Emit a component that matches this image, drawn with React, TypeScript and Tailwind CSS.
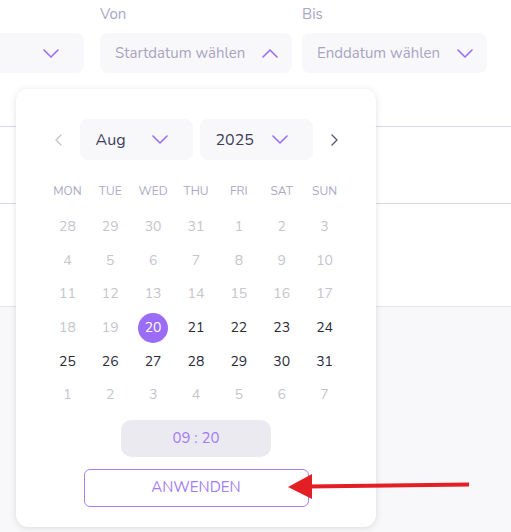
import React from "react";

const WEEKDAYS = ["MON", "TUE", "WED", "THU", "FRI", "SAT", "SUN"];

type Day = { n: number; muted: boolean };

const DAYS: Day[] = [
  ...[28, 29, 30, 31, 1, 2, 3, 4, 5, 6, 7, 8, 9, 10, 11, 12, 13, 14, 15, 16, 17, 18, 19].map((n) => ({ n, muted: true })),
  ...Array.from({ length: 12 }, (_, i) => ({ n: 20 + i, muted: false })),
  ...[1, 2, 3, 4, 5, 6, 7].map((n) => ({ n, muted: true })),
];

function ChevronDown({ className = "" }: { className?: string }) {
  return (
    <svg width="16" height="9" viewBox="0 0 16 9" className={className} fill="none">
      <path d="M1 1l7 7 7-7" stroke="#9b6cf6" strokeWidth="1.6" strokeLinecap="round" strokeLinejoin="round" />
    </svg>
  );
}

function ChevronUp() {
  return (
    <svg width="16" height="9" viewBox="0 0 16 9" fill="none">
      <path d="M1 8l7-7 7 7" stroke="#9b6cf6" strokeWidth="1.6" strokeLinecap="round" strokeLinejoin="round" />
    </svg>
  );
}

function SelectBox({ text, open, className = "" }: { text: string; open?: boolean; className?: string }) {
  return (
    <div className={`flex h-10 items-center justify-between rounded-lg bg-[#f8f8fb] pl-[15px] text-[15px] text-[#a9a4c2] ${className}`}>
      <span>{text}</span>
      {open ? <ChevronUp /> : <ChevronDown />}
    </div>
  );
}

export default function App() {
  return (
    <div className="relative h-[532px] w-[511px] overflow-hidden bg-white font-['Nunito','Lato',sans-serif]">
      {/* page behind */}
      <div className="flex h-[126px] items-start gap-[10px] pt-[5px]">
        <div className="mr-[6px] flex flex-col">
          <div className="h-7" />
          <SelectBox text="" className="ml-[-20px] w-[104px] pr-[25px]" />
        </div>
        <div className="flex flex-col">
          <div className="h-7 -translate-y-[2px] text-[15px] text-[#a9a5c6]">Von</div>
          <SelectBox text="Startdatum wählen" open className="w-[192px] pr-[14px]" />
        </div>
        <div className="flex flex-col">
          <div className="h-7 -translate-y-[2px] text-[15px] text-[#a9a5c6]">Bis</div>
          <SelectBox text="Enddatum wählen" className="w-[185px] pr-[14px]" />
        </div>
      </div>
      <div className="h-[77px] border-t border-[#d9d5ea]" />
      <div className="h-[103px] border-t border-[#d9d5ea]" />
      <div className="h-[300px] border-t border-[#e6e4ee] bg-[#f8f8fa]" />

      {/* date picker popover */}
      <div className="absolute left-4 top-[89px] flex h-[438px] w-[360px] flex-col items-center rounded-xl bg-white px-[30px] pt-[30px] shadow-[0_1px_6px_rgba(60,60,90,0.16)]">
        <div className="flex items-center gap-[7px]">
          <svg width="20" height="20" viewBox="0 0 20 20" fill="none" className="mr-[4px]">
            <path d="M12 5l-5 5 5 5" stroke="#c2c0cc" strokeWidth="1.3" strokeLinecap="round" strokeLinejoin="round" />
          </svg>
          <div className="flex h-[41px] w-[113px] items-center justify-between rounded-lg bg-[#f8f8fb] pl-4 pr-[25px] text-[16px] text-[#3e3d5c]">
            <span>Aug</span>
            <ChevronDown />
          </div>
          <div className="flex h-[41px] w-[113px] items-center justify-between rounded-lg bg-[#f8f8fb] pl-4 pr-[25px] text-[16px] text-[#3e3d5c]">
            <span>2025</span>
            <ChevronDown />
          </div>
          <svg width="20" height="20" viewBox="0 0 20 20" fill="none" className="ml-[4px]">
            <path d="M8 5l5 5-5 5" stroke="#55546e" strokeWidth="1.3" strokeLinecap="round" strokeLinejoin="round" />
          </svg>
        </div>

        <div className="mt-[22px] grid w-[300px] grid-cols-7">
          {WEEKDAYS.map((d) => (
            <div key={d} className="flex h-[18px] items-center justify-center text-[12px] text-[#aca9c6]">
              {d}
            </div>
          ))}
        </div>

        <div className="mt-[10px] grid w-[300px] grid-cols-7">
          {DAYS.map((d, i) => (
            <div key={i} className="flex h-[33.6px] items-center justify-center">
              {d.n === 20 && !d.muted ? (
                <span className="flex h-[30px] w-[30px] items-center justify-center rounded-full bg-[#9b6cf6] text-[14px] text-white">
                  20
                </span>
              ) : (
                <span className={`text-[14px] ${d.muted ? "text-[#c6c5cc]" : "text-[#2a2938]"}`}>{d.n}</span>
              )}
            </div>
          ))}
        </div>

        <div className="mt-[8px] flex h-[37px] w-[150px] items-center justify-center rounded-[10px] bg-[#ebeaf0] text-[15px] text-[#a47cf6]">
          09 : 20
        </div>

        <button className="mt-3 flex h-[38px] w-[225px] items-center justify-center rounded-md border border-[#a77ff7] text-[15px] text-[#a47cf6]">
          ANWENDEN
        </button>
      </div>

      {/* annotation arrow */}
      <svg className="absolute left-0 top-0" width="511" height="532" viewBox="0 0 511 532">
        <line x1="469" y1="484.5" x2="308" y2="486.5" stroke="#e31e24" strokeWidth="4" />
        <polygon points="288,487 312,474 312,499" fill="#e31e24" />
      </svg>
    </div>
  );
}
